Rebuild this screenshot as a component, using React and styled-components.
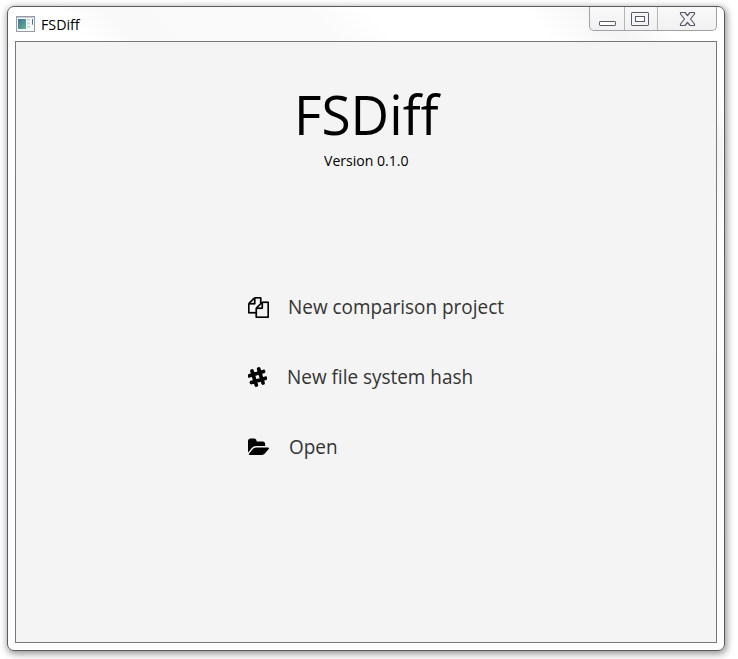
import React from "react";
import styled, { createGlobalStyle } from "styled-components";

const GlobalStyle = createGlobalStyle`
  * { box-sizing: border-box; }
  html, body { margin: 0; background: #fff; overflow: hidden; }
  body { font-family: "Open Sans", "Noto Sans", sans-serif; color: #000; }
`;

const Desktop = styled.div`
  width: 738px;
  height: 659px;
  padding: 6px 13px 8px 7px;
  background: #fff;
`;

const Window = styled.div`
  width: 718px;
  height: 645px;
  padding: 0 7px;
  border: 1px solid #5b5b5d;
  border-radius: 7px;
  background:
    linear-gradient(50deg, transparent 0 84%, rgba(225, 225, 225, 0.35) 90%, transparent 94%),
    linear-gradient(180deg, #fff 0, #fdfdfd 100%);
  box-shadow: 1px 2px 7px 1px rgba(0, 0, 0, 0.42), inset 0 0 0 1px #fff;
`;

const TitleBar = styled.header`
  display: flex;
  align-items: flex-start;
  height: 34px;
  background: linear-gradient(45deg, transparent 10%, #f9f9f9 16%, #fafafa 44%, transparent 52%);
`;

const AppIcon = styled.svg`
  display: block;
  width: 19px;
  height: 16px;
  margin: 9px 0 0 1px;
`;

const Caption = styled.span`
  margin: 7px auto 0 6px;
  font-size: 15px;
  line-height: 20px;
  transform: scaleX(0.95);
  transform-origin: left center;
`;

const Controls = styled.div`
  display: flex;
  width: 128px;
  height: 24px;
  border: 1px solid #a0a1a4;
  border-top: 0;
  border-radius: 0 0 5px 5px;
  background: linear-gradient(#f9f9f9, #f1f1f1);
`;

const ControlButton = styled.button`
  display: block;
  width: ${(p) => p.$width}px;
  padding: 0;
  border: 0;
  border-right: ${(p) => (p.$last ? "0" : "1px solid #b5b6b8")};
  background: transparent;

  svg { display: block; }
`;

const Client = styled.main`
  display: flex;
  flex-direction: column;
  align-items: flex-start;
  width: 702px;
  height: 602px;
  border: 1px solid #77787a;
  background: #f4f4f4;
`;

const Heading = styled.h1`
  margin: 38px 0 0 278px;
  font-size: 55px;
  font-weight: 380;
  line-height: 68px;
  white-space: nowrap;
  transform: scaleX(0.967);
  transform-origin: left center;
`;

const Version = styled.p`
  margin: 3px 0 0 308px;
  font-size: 14.5px;
  line-height: 20px;
  transform: scaleX(0.97);
  transform-origin: left center;
`;

const Actions = styled.nav`
  display: flex;
  flex-direction: column;
  gap: 40px;
  margin: 121px 0 0 232px;
`;

const Action = styled.button`
  display: flex;
  align-items: center;
  gap: ${(p) => p.$gap}px;
  height: 30px;
  padding: 0;
  border: 0;
  background: transparent;
  color: #333;
  font: 400 19.5px/30px "Open Sans", "Noto Sans", sans-serif;
  white-space: nowrap;

  svg { flex: none; display: block; color: #000; }
`;

const ActionLabel = styled.span`
  transform: scaleX(0.971);
  transform-origin: left center;
`;

const CopyIcon = () => (
  <svg width="21" height="21" viewBox="0 0 1792 1792" fill="currentColor" stroke="currentColor" strokeWidth="20">
    <path d="M1696 384q40 0 68 28t28 68v1216q0 40-28 68t-68 28h-960q-40 0-68-28t-28-68v-288h-544q-40 0-68-28t-28-68v-672q0-40 20-88t48-76l408-408q28-28 76-48t88-20h416q40 0 68 28t28 68v328q68-40 128-40h416zm-544 213l-299 299h299v-299zm-640-384l-299 299h299v-299zm196 647l316-316v-416h-384v416q0 40-28 68t-68 28h-416v640h512v-256q0-40 20-88t48-76zm956 804v-1152h-384v416q0 40-28 68t-68 28h-416v640h896z" />
  </svg>
);

const HashIcon = () => (
  <svg width="19" height="20" viewBox="0 0 19 20" fill="none" stroke="currentColor" strokeWidth="3.7" strokeLinecap="round">
    <g transform="rotate(-17 9.5 10)">
      <path d="M6 2.600v14.800M13 2.600v14.800M2.100 6.500h14.800M2.100 13.500h14.800" />
    </g>
  </svg>
);

const FolderIcon = () => (
  <svg width="21" height="21" viewBox="0 0 1879 1792" fill="currentColor" preserveAspectRatio="none">
    <path d="M1879 952q0 31-31 66l-336 396q-43 51-120.500 86.500t-143.500 35.500h-1088q-34 0-60.500-13t-26.500-43q0-31 31-66l336-396q43-51 120.500-86.500t143.500-35.500h1088q34 0 60.500 13t26.500 43zm-343-344v160h-832q-94 0-197 47.500t-164 119.500l-337 396-5 6q0-4-.5-12.500t-.5-12.500v-960q0-92 66-158t158-66h320q92 0 158 66t66 158v32h544q92 0 158 66t66 158z" />
  </svg>
);

export default function App() {
  return (
    <>
      <GlobalStyle />
      <Desktop>
        <Window>
          <TitleBar>
            <AppIcon viewBox="0 0 19 16">
              <defs>
                <linearGradient id="pane" x1="0" y1="0" x2="1" y2="1">
                  <stop offset="0" stopColor="#46709f" />
                  <stop offset="1" stopColor="#5fb58a" />
                </linearGradient>
              </defs>
              <rect x=".5" y=".5" width="18" height="15" fill="#f8f9fa" stroke="#959da6" />
              <path d="M1 1.5h17" stroke="#c6ced8" />
              <rect x="2" y="3" width="8" height="10" fill="url(#pane)" />
              <path d="M11 4h3M11 7.500h3M11 11h3" stroke="#d5d5d5" strokeWidth="2" />
              <path d="M16.500 3v5" stroke="#3f79a4" />
              <path d="M16.500 8v1" stroke="#72b984" />
            </AppIcon>
            <Caption>FSDiff</Caption>
            <Controls>
              <ControlButton $width={35} aria-label="Minimize">
                <svg width="34" height="23" viewBox="0 0 34 23">
                  <rect x="9.500" y="14.500" width="16" height="4" rx=".6" fill="#fff" stroke="#555a6b" />
                </svg>
              </ControlButton>
              <ControlButton $width={33} aria-label="Maximize">
                <svg width="32" height="23" viewBox="0 0 32 23">
                  <rect x="6.500" y="5.500" width="17" height="13" rx=".6" fill="#f4f4f4" stroke="#555a6b" />
                  <rect x="10.500" y="9.500" width="9" height="5" fill="#fff" stroke="#555a6b" />
                </svg>
              </ControlButton>
              <ControlButton $width={58} $last aria-label="Close">
                <svg width="58" height="23" viewBox="0 0 58 23">
                  <path d="M22.500 5.500h4.500l2.500 3 2.500-3h4.500v1.500l-4 5 4 5v1.500h-4.500l-2.500-3-2.500 3h-4.500v-1.500l4-5-4-5z" fill="#f2f2f2" stroke="#555a6b" strokeWidth="1.200" strokeLinejoin="round" />
                </svg>
              </ControlButton>
            </Controls>
          </TitleBar>
          <Client>
            <Heading>FSDiff</Heading>
            <Version>Version 0.1.0</Version>
            <Actions>
              <Action $gap={19}><CopyIcon /><ActionLabel>New comparison project</ActionLabel></Action>
              <Action $gap={20}><HashIcon /><ActionLabel>New file system hash</ActionLabel></Action>
              <Action $gap={20}><FolderIcon /><ActionLabel>Open</ActionLabel></Action>
            </Actions>
          </Client>
        </Window>
      </Desktop>
    </>
  );
}
